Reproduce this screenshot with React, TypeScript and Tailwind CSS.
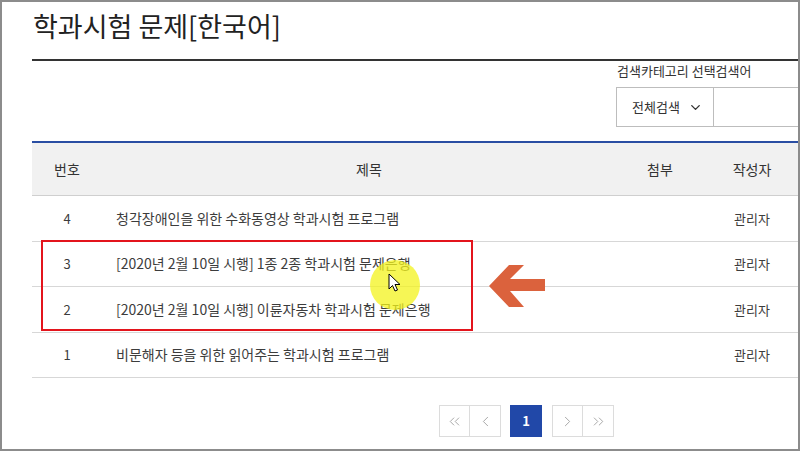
import { ChevronDown, ChevronLeft, ChevronRight, ChevronsLeft, ChevronsRight } from "lucide-react";

const rows = [
  { no: 4, title: "청각장애인을 위한 수화동영상 학과시험 프로그램", writer: "관리자" },
  { no: 3, title: "[2020년 2월 10일 시행] 1종 2종 학과시험 문제은행", writer: "관리자" },
  { no: 2, title: "[2020년 2월 10일 시행] 이륜자동차 학과시험 문제은행", writer: "관리자" },
  { no: 1, title: "비문해자 등을 위한 읽어주는 학과시험 프로그램", writer: "관리자" },
];

function Pager() {
  const cell = "w-[31px] h-[32px] flex items-center justify-center border border-[#dcdcdc] bg-white text-[#9a9a9a]";
  return (
    <div className="flex items-center pl-[407px] pt-[27px]">
      <div className="flex">
        <span className={cell}>
          <ChevronsLeft className="w-[17px] h-[17px]" strokeWidth={1.2} />
        </span>
        <span className={`${cell} border-l-0`}>
          <ChevronLeft className="w-[17px] h-[17px]" strokeWidth={1.2} />
        </span>
      </div>
      <span className="ml-[9px] w-[32px] h-[32px] flex items-center justify-center bg-[#2148a8] text-white text-[13px] font-bold">
        1
      </span>
      <div className="flex ml-[10px]">
        <span className={cell}>
          <ChevronRight className="w-[17px] h-[17px]" strokeWidth={1.2} />
        </span>
        <span className={`${cell} border-l-0`}>
          <ChevronsRight className="w-[17px] h-[17px]" strokeWidth={1.2} />
        </span>
      </div>
    </div>
  );
}

export default function App() {
  return (
    <div
      className="relative w-[800px] h-[451px] border-2 border-[#8c8c8c] bg-white overflow-hidden text-[#3c3c3c]"
      style={{ fontFamily: '"Noto Sans CJK KR", "Noto Sans", sans-serif' }}
    >
      <div className="pl-[30px]">
        {/* title */}
        <div className="h-[59px] border-b-2 border-[#333] flex items-start pt-[5px]">
          <h1 className="text-[27px] leading-[38px] text-[#222] pl-[1px]">
            학과시험 문제[한국어]
          </h1>
        </div>

        {/* search */}
        <div className="h-[80px] flex justify-end">
          <div className="w-[182px]">
            <p className="text-[13px] leading-[20px] text-[#333] pl-[1px]">
              검색카테고리 선택검색어
            </p>
            <div className="mt-[6px] flex h-[40px]">
              <div className="w-[98px] border border-[#bdbdbd] flex items-center pl-[15px] gap-[8px] text-[13px] text-[#333]">
                <span>전체검색</span>
                <ChevronDown className="w-[15px] h-[15px] text-[#333]" strokeWidth={2.2} />
              </div>
              <div className="flex-1 border border-l-0 border-r-0 border-[#bdbdbd]" />
            </div>
          </div>
        </div>

        {/* table */}
        <div className="border-t-2 border-[#2a4ea3]">
          <div className="h-[53px] bg-[#f1f1f1] border-b border-[#cfcfcf] flex items-center text-[14px] text-[#333]">
            <div className="w-[70px] text-center">번호</div>
            <div className="flex-1 text-center pl-[6px]">제목</div>
            <div className="w-[60px] text-center">첨부</div>
            <div className="w-[108px] text-center pl-[16px]">작성자</div>
          </div>
          {rows.map((r) => (
            <div
              key={r.no}
              className="h-[45.5px] border-b border-[#d7d7d7] flex items-center text-[13px]"
            >
              <div className="w-[70px] text-center">{r.no}</div>
              <div className="flex-1 pl-[14px] text-[14px]">{r.title}</div>
              <div className="w-[60px]" />
              <div className="w-[108px] text-center pl-[16px]">{r.writer}</div>
            </div>
          ))}
        </div>

        <Pager />
      </div>

      {/* highlight box */}
      <div className="absolute left-[39px] top-[238px] w-[432px] h-[91px] border-2 border-[#e3141c]" />

      {/* arrow */}
      <svg className="absolute left-[484px] top-[260px]" width="60" height="48" viewBox="0 0 60 48">
        <polygon
          points="3,24 23,3 38,3 24,17 59,17 59,29 24,29 38,45 23,45"
          fill="#db623d"
        />
      </svg>

      {/* cursor spot */}
      <div className="absolute left-[368px] top-[258px] w-[50px] h-[50px] rounded-full bg-[#f3f31c]/75" />
      <svg className="absolute left-[386px] top-[271px]" width="14" height="20" viewBox="0 0 14 20">
        <path d="M1 1 L1 16 L4.5 12.5 L7 18 L9.5 17 L7 11.5 L12 11.5 Z" fill="white" stroke="black" strokeWidth="1" />
      </svg>
    </div>
  );
}
